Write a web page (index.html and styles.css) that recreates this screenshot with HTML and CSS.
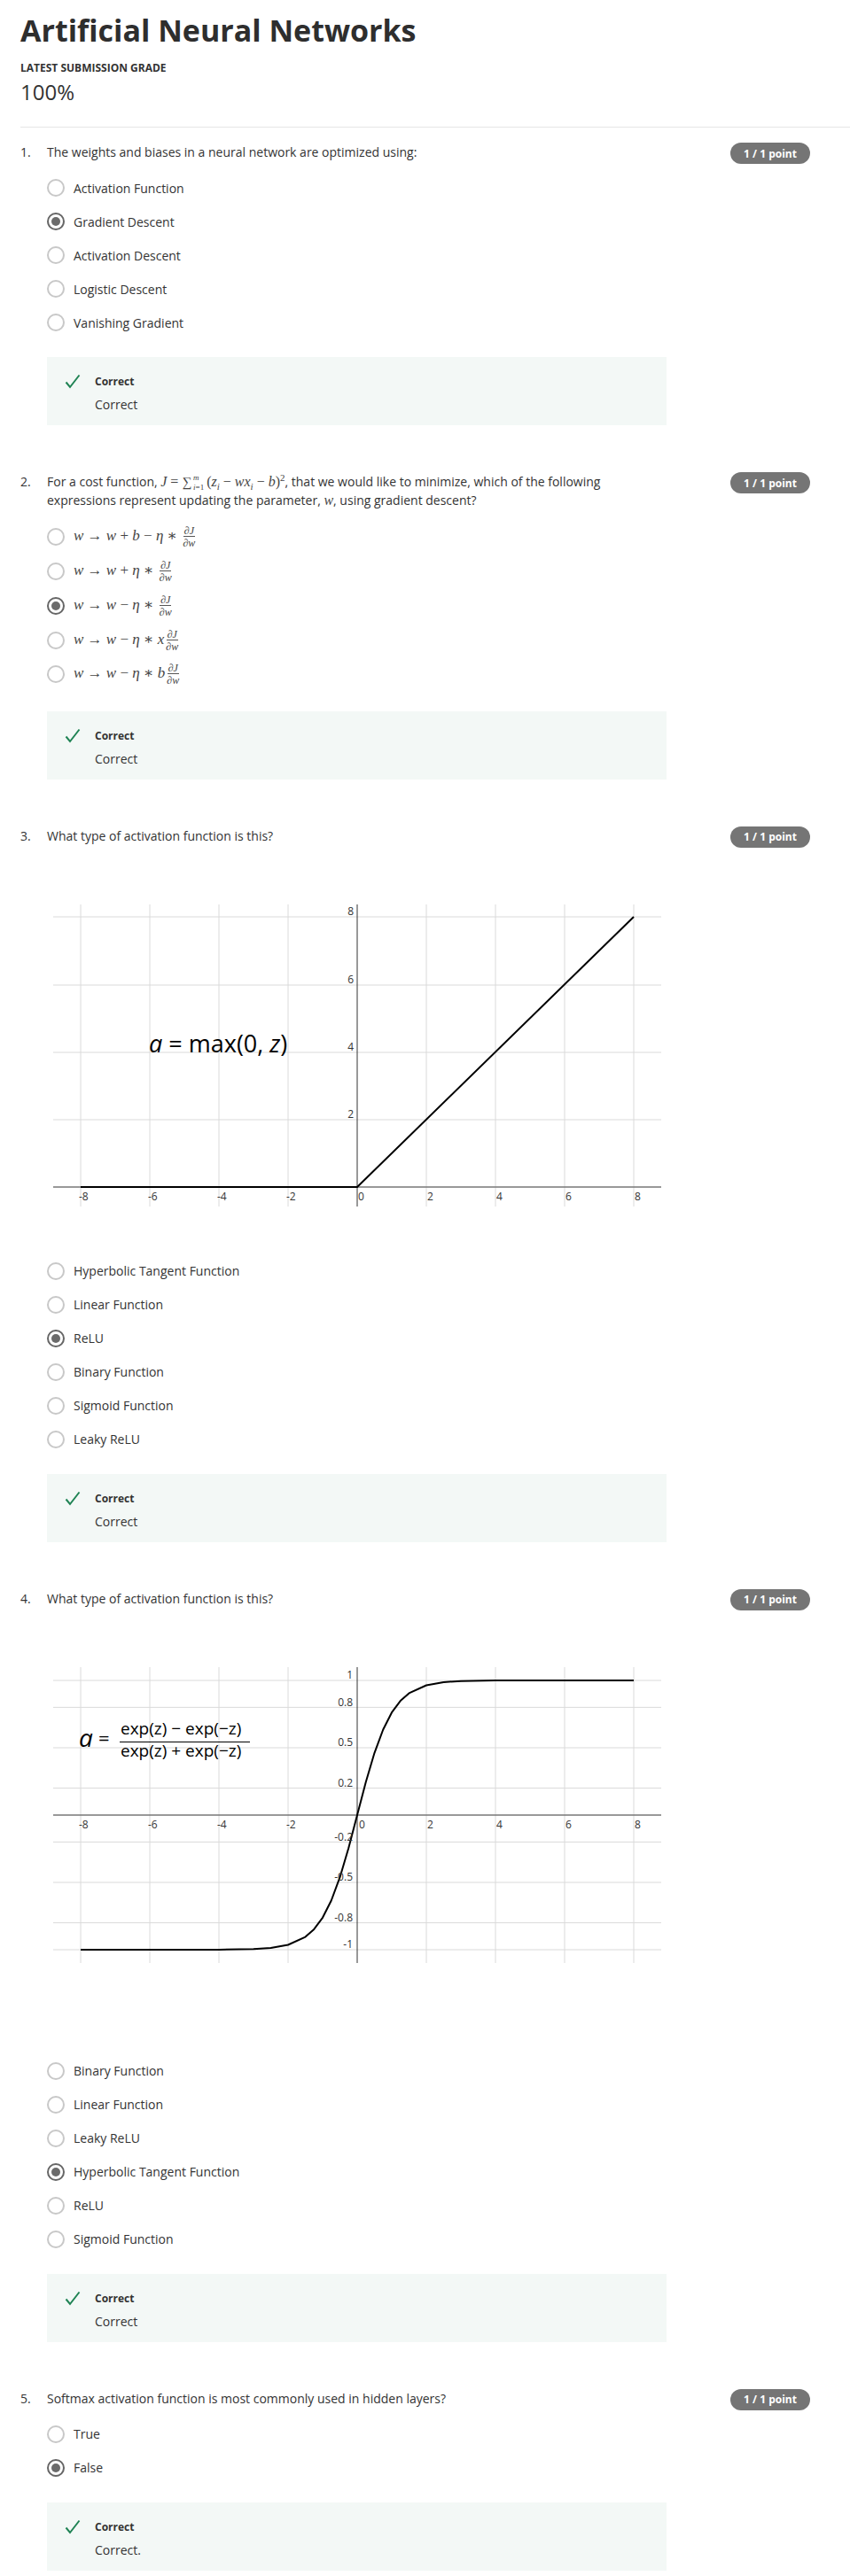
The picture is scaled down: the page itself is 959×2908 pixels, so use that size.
FILE: index.html
```html
<!DOCTYPE html>
<html lang="en">
<head>
<meta charset="utf-8">
<title>Artificial Neural Networks</title>
<link rel="stylesheet" href="styles.css">
</head>
<body>
<main class="page">
  <header class="summary">
    <h1 class="title">Artificial Neural Networks</h1>
    <div class="grade-label">LATEST SUBMISSION GRADE</div>
    <div class="grade-value">100%</div>
  </header>
  <hr class="divider">

  <div class="questions">
    <!-- Question 1 -->
    <section class="question">
      <div class="q-head">
        <span class="q-num">1.</span>
        <div class="q-text">The weights and biases in a neural network are optimized using:</div>
        <span class="badge">1 / 1 point</span>
      </div>
      <div class="q-body">
        <ul class="options">
          <li class="option"><span class="radio"></span><span>Activation Function</span></li>
          <li class="option"><span class="radio radio--checked"></span><span>Gradient Descent</span></li>
          <li class="option"><span class="radio"></span><span>Activation Descent</span></li>
          <li class="option"><span class="radio"></span><span>Logistic Descent</span></li>
          <li class="option"><span class="radio"></span><span>Vanishing Gradient</span></li>
        </ul>
        <div class="feedback">
          <svg class="check" viewBox="0 0 18 18" width="18" height="18"><polyline points="1.5,9.5 6,15 16.5,1.5" fill="none" stroke="#1f8354" stroke-width="2"/></svg>
          <span class="fb-title">Correct</span>
          <span class="fb-text">Correct</span>
        </div>
      </div>
    </section>

    <!-- Question 2 -->
    <section class="question">
      <div class="q-head">
        <span class="q-num">2.</span>
        <div class="q-text"><span>For a cost function, </span><span class="math"><i>J</i><span class="op"> = </span><span class="sum">∑</span><span class="limits"><span class="sup"><i>m</i></span><span class="sub"><i>i</i><span>=1</span></span></span><span>(</span><i>z</i><sub><i>i</i></sub><span class="op"> − </span><i>w</i><i>x</i><sub><i>i</i></sub><span class="op"> − </span><i>b</i><span>)</span><sup>2</sup></span><span>, that we would like to minimize, which of the following </span><span>expressions represent updating the parameter, </span><span class="math"><i>w</i></span><span>, using gradient descent?</span></div>
        <span class="badge">1 / 1 point</span>
      </div>
      <div class="q-body">
        <ul class="options options--math">
          <li class="option"><span class="radio"></span><span class="math"><i>w</i><span class="op"> → </span><i>w</i><span class="op"> + </span><i>b</i><span class="op"> − </span><i>η</i><span class="op"> ∗ </span><span class="frac"><span class="num">∂<i>J</i></span><span class="den">∂<i>w</i></span></span></span></li>
          <li class="option"><span class="radio"></span><span class="math"><i>w</i><span class="op"> → </span><i>w</i><span class="op"> + </span><i>η</i><span class="op"> ∗ </span><span class="frac"><span class="num">∂<i>J</i></span><span class="den">∂<i>w</i></span></span></span></li>
          <li class="option"><span class="radio radio--checked"></span><span class="math"><i>w</i><span class="op"> → </span><i>w</i><span class="op"> − </span><i>η</i><span class="op"> ∗ </span><span class="frac"><span class="num">∂<i>J</i></span><span class="den">∂<i>w</i></span></span></span></li>
          <li class="option"><span class="radio"></span><span class="math"><i>w</i><span class="op"> → </span><i>w</i><span class="op"> − </span><i>η</i><span class="op"> ∗ </span><i>x</i><span class="frac"><span class="num">∂<i>J</i></span><span class="den">∂<i>w</i></span></span></span></li>
          <li class="option"><span class="radio"></span><span class="math"><i>w</i><span class="op"> → </span><i>w</i><span class="op"> − </span><i>η</i><span class="op"> ∗ </span><i>b</i><span class="frac"><span class="num">∂<i>J</i></span><span class="den">∂<i>w</i></span></span></span></li>
        </ul>
        <div class="feedback">
          <svg class="check" viewBox="0 0 18 18" width="18" height="18"><polyline points="1.5,9.5 6,15 16.5,1.5" fill="none" stroke="#1f8354" stroke-width="2"/></svg>
          <span class="fb-title">Correct</span>
          <span class="fb-text">Correct</span>
        </div>
      </div>
    </section>

    <!-- Question 3 -->
    <section class="question">
      <div class="q-head">
        <span class="q-num">3.</span>
        <div class="q-text">What type of activation function is this?</div>
        <span class="badge">1 / 1 point</span>
      </div>
      <div class="q-body">
        <svg class="chart chart--relu" width="700" height="459" viewBox="53 957 700 459">
          <g class="grid">
            <line x1="91" y1="1021" x2="91" y2="1362"/>
            <line x1="169" y1="1021" x2="169" y2="1362"/>
            <line x1="247" y1="1021" x2="247" y2="1362"/>
            <line x1="325" y1="1021" x2="325" y2="1362"/>
            <line x1="481" y1="1021" x2="481" y2="1362"/>
            <line x1="559" y1="1021" x2="559" y2="1362"/>
            <line x1="637" y1="1021" x2="637" y2="1362"/>
            <line x1="715" y1="1021" x2="715" y2="1362"/>
            <line x1="60" y1="1035" x2="746" y2="1035"/>
            <line x1="60" y1="1112" x2="746" y2="1112"/>
            <line x1="60" y1="1188" x2="746" y2="1188"/>
            <line x1="60" y1="1264" x2="746" y2="1264"/>
          </g>
          <line class="axis-y" x1="403" y1="1021" x2="403" y2="1362"/>
          <line class="axis-x" x1="60" y1="1340" x2="746" y2="1340"/>
          <polyline class="curve" points="91,1340 403,1340 715,1035"/>
          <g class="tick-x">
            <text x="89" y="1355">-8</text>
            <text x="167" y="1355">-6</text>
            <text x="245" y="1355">-4</text>
            <text x="323" y="1355">-2</text>
            <text x="404" y="1355">0</text>
            <text x="482" y="1355">2</text>
            <text x="560" y="1355">4</text>
            <text x="638" y="1355">6</text>
            <text x="716" y="1355">8</text>
          </g>
          <g class="tick-y">
            <text x="399" y="1033">8</text>
            <text x="399" y="1110">6</text>
            <text x="399" y="1186">4</text>
            <text x="399" y="1262">2</text>
          </g>
          <text class="formula" x="168" y="1188"><tspan font-style="italic">a</tspan> = max(0, <tspan font-style="italic">z</tspan>)</text>
        </svg>
        <ul class="options options--flush">
          <li class="option"><span class="radio"></span><span>Hyperbolic Tangent Function</span></li>
          <li class="option"><span class="radio"></span><span>Linear Function</span></li>
          <li class="option"><span class="radio radio--checked"></span><span>ReLU</span></li>
          <li class="option"><span class="radio"></span><span>Binary Function</span></li>
          <li class="option"><span class="radio"></span><span>Sigmoid Function</span></li>
          <li class="option"><span class="radio"></span><span>Leaky ReLU</span></li>
        </ul>
        <div class="feedback">
          <svg class="check" viewBox="0 0 18 18" width="18" height="18"><polyline points="1.5,9.5 6,15 16.5,1.5" fill="none" stroke="#1f8354" stroke-width="2"/></svg>
          <span class="fb-title">Correct</span>
          <span class="fb-text">Correct</span>
        </div>
      </div>
    </section>

    <!-- Question 4 -->
    <section class="question">
      <div class="q-head">
        <span class="q-num">4.</span>
        <div class="q-text">What type of activation function is this?</div>
        <span class="badge">1 / 1 point</span>
      </div>
      <div class="q-body">
        <svg class="chart chart--tanh" width="700" height="501" viewBox="53 1819 700 501">
          <g class="grid">
            <line x1="91" y1="1883" x2="91" y2="2217"/>
            <line x1="169" y1="1883" x2="169" y2="2217"/>
            <line x1="247" y1="1883" x2="247" y2="2217"/>
            <line x1="325" y1="1883" x2="325" y2="2217"/>
            <line x1="481" y1="1883" x2="481" y2="2217"/>
            <line x1="559" y1="1883" x2="559" y2="2217"/>
            <line x1="637" y1="1883" x2="637" y2="2217"/>
            <line x1="715" y1="1883" x2="715" y2="2217"/>
            <line x1="60" y1="1898" x2="746" y2="1898"/>
            <line x1="60" y1="1928.4" x2="746" y2="1928.4"/>
            <line x1="60" y1="1974" x2="746" y2="1974"/>
            <line x1="60" y1="2019.6" x2="746" y2="2019.6"/>
            <line x1="60" y1="2080.4" x2="746" y2="2080.4"/>
            <line x1="60" y1="2126" x2="746" y2="2126"/>
            <line x1="60" y1="2171.6" x2="746" y2="2171.6"/>
            <line x1="60" y1="2202" x2="746" y2="2202"/>
          </g>
          <line class="axis-y" x1="403" y1="1883" x2="403" y2="2217"/>
          <line class="axis-x" x1="60" y1="2050" x2="746" y2="2050"/>
          <polyline class="curve" points="91,2202 247,2201.9 286,2201.3 305.5,2200 325,2196.5 344.5,2187.6 354.25,2178.9 364,2165.8 373.75,2146.5 383.5,2120.2 393.25,2087.2 403,2050 412.75,2012.8 422.5,1979.8 432.25,1953.5 442,1934.2 451.75,1921.1 461.5,1912.4 481,1903.5 500.5,1900 520,1898.7 559,1898.1 715,1898"/>
          <g class="tick-x">
            <text x="89" y="2065">-8</text>
            <text x="167" y="2065">-6</text>
            <text x="245" y="2065">-4</text>
            <text x="323" y="2065">-2</text>
            <text x="405" y="2065">0</text>
            <text x="482" y="2065">2</text>
            <text x="560" y="2065">4</text>
            <text x="638" y="2065">6</text>
            <text x="716" y="2065">8</text>
          </g>
          <g class="tick-y">
            <text x="398" y="1896">1</text>
            <text x="398" y="1926.5">0.8</text>
            <text x="398" y="1972">0.5</text>
            <text x="398" y="2017.5">0.2</text>
            <text x="398" y="2078.5">-0.2</text>
            <text x="398" y="2124">-0.5</text>
            <text x="398" y="2169.5">-0.8</text>
            <text x="398" y="2200">-1</text>
          </g>
          <g class="formula">
            <text x="89" y="1973" font-size="28" font-style="italic">a</text>
            <text x="111" y="1971" font-size="22">=</text>
            <text class="formula-part" x="136" y="1959">exp(z) − exp(−z)</text>
            <line x1="135" y1="1967.5" x2="282" y2="1967.5" stroke="#000" stroke-width="1.2"/>
            <text class="formula-part" x="136" y="1984">exp(z) + exp(−z)</text>
          </g>
        </svg>
        <ul class="options options--flush">
          <li class="option"><span class="radio"></span><span>Binary Function</span></li>
          <li class="option"><span class="radio"></span><span>Linear Function</span></li>
          <li class="option"><span class="radio"></span><span>Leaky ReLU</span></li>
          <li class="option"><span class="radio radio--checked"></span><span>Hyperbolic Tangent Function</span></li>
          <li class="option"><span class="radio"></span><span>ReLU</span></li>
          <li class="option"><span class="radio"></span><span>Sigmoid Function</span></li>
        </ul>
        <div class="feedback">
          <svg class="check" viewBox="0 0 18 18" width="18" height="18"><polyline points="1.5,9.5 6,15 16.5,1.5" fill="none" stroke="#1f8354" stroke-width="2"/></svg>
          <span class="fb-title">Correct</span>
          <span class="fb-text">Correct</span>
        </div>
      </div>
    </section>

    <!-- Question 5 -->
    <section class="question">
      <div class="q-head">
        <span class="q-num">5.</span>
        <div class="q-text">Softmax activation function is most commonly used in hidden layers?</div>
        <span class="badge">1 / 1 point</span>
      </div>
      <div class="q-body">
        <ul class="options">
          <li class="option"><span class="radio"></span><span>True</span></li>
          <li class="option"><span class="radio radio--checked"></span><span>False</span></li>
        </ul>
        <div class="feedback">
          <svg class="check" viewBox="0 0 18 18" width="18" height="18"><polyline points="1.5,9.5 6,15 16.5,1.5" fill="none" stroke="#1f8354" stroke-width="2"/></svg>
          <span class="fb-title">Correct</span>
          <span class="fb-text">Correct.</span>
        </div>
      </div>
    </section>
  </div>
</main>
</body>
</html>
```

FILE: styles.css
```css
* { box-sizing: border-box; }

body {
  margin: 0;
  background: #fff;
  color: #333;
  font-family: "Open Sans", "Noto Sans", "DejaVu Sans", sans-serif;
}

.page {
  padding: 11px 0 6px 23px;
}

.title {
  margin: 0;
  font-size: 34px;
  line-height: 46px;
  font-weight: 700;
  color: #2e2e2e;
}

.grade-label {
  margin-top: 12px;
  font-size: 12px;
  line-height: 16px;
  font-weight: 700;
  color: #333;
}

.grade-value {
  margin-top: 3px;
  font-size: 24px;
  line-height: 32px;
  font-weight: 400;
  color: #333;
}

.divider {
  margin: 23px 0 0;
  height: 0;
  border: 0;
  border-top: 1px solid #e5e5e5;
}

.questions {
  padding-right: 45px;
}

.question {
  margin-top: 53px;
}

.question:first-child {
  margin-top: 17px;
}

.q-head {
  display: flex;
  align-items: flex-start;
  font-size: 14px;
  line-height: 21px;
}

.q-num {
  flex: none;
  width: 30px;
}

.q-text {
  flex: 0 1 700px;
}

.badge {
  flex: none;
  margin-left: auto;
  width: 90px;
  height: 24px;
  border-radius: 12px;
  background: #757575;
  color: #fff;
  font-size: 12px;
  font-weight: 700;
  display: flex;
  align-items: center;
  justify-content: center;
}

.q-body {
  padding-left: 30px;
}

.options {
  list-style: none;
  margin: 8px 0 0;
  padding: 0;
}

.options--math {
  margin-top: 12px;
}

.options--math .option {
  height: 38.75px;
}

.options--flush {
  margin-top: 0;
}

.option {
  height: 38px;
  display: flex;
  align-items: center;
  gap: 10px;
  font-size: 14px;
}

.radio {
  flex: none;
  width: 20px;
  height: 20px;
  border-radius: 50%;
  border: 2px solid #c8c8c8;
  display: flex;
  align-items: center;
  justify-content: center;
}

.radio--checked {
  border-color: #666;
}

.radio--checked::after {
  content: "";
  width: 10px;
  height: 10px;
  border-radius: 50%;
  background: #6b6b6b;
}

.math {
  font-family: "Liberation Serif", "DejaVu Serif", serif;
  font-size: 16px;
  line-height: 0;
  color: #444;
  white-space: nowrap;
}

.options--math .math {
  font-size: 17px;
}

.op {
  white-space: pre;
}

.math sub,
.math sup {
  font-size: 11px;
  line-height: 0;
}

.sum {
  font-size: 15px;
  margin-right: 1px;
}

.limits {
  display: inline-flex;
  flex-direction: column;
  justify-content: center;
  height: 10px;
  vertical-align: middle;
  font-size: 9px;
  line-height: 11px;
  margin: 0 3px 0 1px;
}

.frac {
  display: inline-flex;
  flex-direction: column;
  align-items: center;
  vertical-align: middle;
  font-size: 12px;
  line-height: 12px;
  margin-left: 2px;
}

.frac .num {
  padding: 0 1px;
  border-bottom: 1px solid #555;
}

.frac .den {
  padding-top: 1px;
}

.feedback {
  margin-top: 20px;
  width: 699px;
  padding: 18px 20px 13px;
  background: #f3f8f6;
  display: grid;
  grid-template-columns: 34px 1fr;
  align-items: center;
}

.options--math + .feedback {
  margin-top: 22px;
}

.check {
  display: block;
}

.fb-title {
  font-size: 12px;
  line-height: 20px;
  font-weight: 700;
  color: #333;
}

.fb-text {
  grid-column: 2;
  margin-top: 5px;
  font-size: 14px;
  line-height: 21px;
  color: #333;
}

.chart {
  display: block;
  font-family: "Open Sans", "Noto Sans", sans-serif;
}

.chart .grid line {
  stroke: #dadada;
  stroke-width: 1;
}

.axis-y {
  stroke: #333;
  stroke-width: 1;
}

.axis-x {
  stroke: #777;
  stroke-width: 1.5;
}

.curve {
  fill: none;
  stroke: #000;
  stroke-width: 2;
  stroke-linejoin: round;
}

.tick-x text,
.tick-y text {
  font-size: 12px;
  fill: #333;
}

.tick-y text {
  text-anchor: end;
}

.formula {
  font-size: 27px;
  fill: #000;
}

.formula-part {
  font-size: 19px;
}
```
